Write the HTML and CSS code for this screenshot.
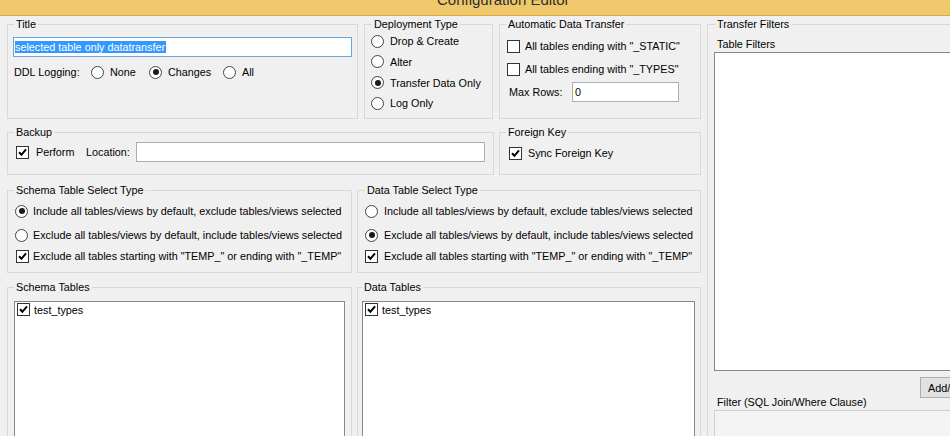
FILE: index.html
```html
<!DOCTYPE html>
<html>
<head>
<meta charset="utf-8">
<title>Configuration Editor</title>
<link rel="stylesheet" href="styles.css">
</head>
<body>
<div class="titlebar"><span class="title-text">Configuration Editor</span></div>
<div class="form">
  <div class="left">
    <div class="row row1">
      <fieldset class="grp g-title">
        <legend>Title</legend>
        <div class="textbox focused"><span class="sel">selected table only datatransfer</span></div>
        <div class="ddl">
          <span class="ddl-label">DDL Logging:</span>
          <span class="opt w-none"><span class="radio"></span>None</span>
          <span class="opt w-changes"><span class="radio on"></span>Changes</span>
          <span class="opt"><span class="radio"></span>All</span>
        </div>
      </fieldset>
      <fieldset class="grp g-deploy">
        <legend>Deployment Type</legend>
        <div class="stack">
          <div class="opt dep"><span class="radio"></span>Drop &amp; Create</div>
          <div class="opt dep"><span class="radio"></span>Alter</div>
          <div class="opt dep"><span class="radio on"></span>Transfer Data Only</div>
          <div class="opt dep"><span class="radio"></span>Log Only</div>
        </div>
      </fieldset>
      <fieldset class="grp g-adt">
        <legend>Automatic Data Transfer</legend>
        <div class="adt-body">
          <div class="opt adt-row"><span class="check"></span>All tables ending with "_STATIC"</div>
          <div class="opt adt-row"><span class="check"></span>All tables ending with "_TYPES"</div>
          <div class="opt adt-row max">
            <span class="max-label">Max Rows:</span>
            <div class="textbox small">0</div>
          </div>
        </div>
      </fieldset>
    </div>

    <div class="row row2">
      <fieldset class="grp g-backup">
        <legend>Backup</legend>
        <div class="opt backup-row">
          <span class="check on"><svg viewBox="0 0 11 11"><path d="M2 5.3 L4.4 7.8 L9 2.4"/></svg></span>
          <span class="perform">Perform</span>
          <span class="loc-label">Location:</span>
          <div class="textbox loc"></div>
        </div>
      </fieldset>
      <fieldset class="grp g-fk">
        <legend>Foreign Key</legend>
        <div class="opt fk-row"><span class="check on"><svg viewBox="0 0 11 11"><path d="M2 5.3 L4.4 7.8 L9 2.4"/></svg></span>Sync Foreign Key</div>
      </fieldset>
    </div>

    <div class="row row3">
      <fieldset class="grp g-schema-sel">
        <legend>Schema Table Select Type</legend>
        <div class="sel-body">
          <div class="opt s1"><span class="radio on"></span>Include all tables/views by default, exclude tables/views selected</div>
          <div class="opt s2"><span class="radio"></span>Exclude all tables/views by default, include tables/views selected</div>
          <div class="opt s3"><span class="check on"><svg viewBox="0 0 11 11"><path d="M2 5.3 L4.4 7.8 L9 2.4"/></svg></span>Exclude all tables starting with "TEMP_" or ending with "_TEMP"</div>
        </div>
      </fieldset>
      <fieldset class="grp g-data-sel">
        <legend>Data Table Select Type</legend>
        <div class="sel-body">
          <div class="opt s1"><span class="radio"></span>Include all tables/views by default, exclude tables/views selected</div>
          <div class="opt s2"><span class="radio on"></span>Exclude all tables/views by default, include tables/views selected</div>
          <div class="opt s3"><span class="check on"><svg viewBox="0 0 11 11"><path d="M2 5.3 L4.4 7.8 L9 2.4"/></svg></span>Exclude all tables starting with "TEMP_" or ending with "_TEMP"</div>
        </div>
      </fieldset>
    </div>

    <div class="row row4">
      <fieldset class="grp g-schema-tables">
        <legend>Schema Tables</legend>
        <div class="listbox">
          <div class="item"><span class="check on"><svg viewBox="0 0 11 11"><path d="M2 5.3 L4.4 7.8 L9 2.4"/></svg></span>test_types</div>
        </div>
      </fieldset>
      <fieldset class="grp g-data-tables">
        <legend>Data Tables</legend>
        <div class="listbox">
          <div class="item"><span class="check on"><svg viewBox="0 0 11 11"><path d="M2 5.3 L4.4 7.8 L9 2.4"/></svg></span>test_types</div>
        </div>
      </fieldset>
    </div>
  </div>

  <fieldset class="grp g-filters">
    <legend>Transfer Filters</legend>
    <div class="tf-label">Table Filters</div>
    <div class="listbox tf-list"></div>
    <div class="btn-row"><button class="btn">Add/Update</button></div>
    <div class="filter-label">Filter (SQL Join/Where Clause)</div>
    <div class="filter-box"></div>
  </fieldset>
</div>
</body>
</html>
```

FILE: styles.css
```css
html, body {
  margin: 0;
  padding: 0;
  background: #f0f0f0;
  overflow: hidden;
  width: 950px;
  height: 436px;
}

body {
  font-family: "Liberation Sans", Arial, sans-serif;
  font-size: 10.8px;
  color: #000;
}

.titlebar {
  height: 15px;
  background: #efc86b;
  border-bottom: 1px solid #d9a845;
  overflow: hidden;
  padding-left: 437px;
}

.title-text {
  display: block;
  font-size: 15px;
  line-height: 17px;
  margin-top: -9px;
  color: #2e2e2e;
  white-space: nowrap;
}

.form {
  display: flex;
  align-items: flex-start;
  padding-left: 7px;
  margin-top: 2px;
}

.left {
  width: 694px;
  flex: none;
}

.row {
  display: flex;
  gap: 0;
}

.row2 { margin-top: 7px; }
.row3 { margin-top: 9px; }
.row4 { margin-top: 8px; }

.grp {
  margin: 0;
  padding: 0;
  border: 1px solid #d8d8d8;
  box-sizing: border-box;
  min-width: 0;
  flex: none;
}

.grp legend {
  padding: 0 2px;
  margin-left: 6px;
  line-height: 13px;
  font-size: 10.8px;
  white-space: nowrap;
}

/* row 1 */
.g-title { width: 351px; height: 101px; }
.g-deploy { width: 129px; height: 101px; margin-left: 6px; }
.g-deploy legend { margin-left: 7px; }
.g-adt { width: 202px; height: 101px; margin-left: 6px; }

.textbox {
  box-sizing: border-box;
  height: 20px;
  background: #fff;
  border: 1px solid #abadb3;
  display: flex;
  align-items: center;
  padding-left: 2px;
  white-space: nowrap;
}

.textbox.focused {
  width: 339px;
  margin: 6px 0 0 5px;
  border-color: #6ea4dc;
  padding-left: 1px;
}

.sel {
  background: #3399ff;
  color: #fff;
  line-height: 12px;
  padding-right: 1px;
}

.ddl {
  display: flex;
  align-items: center;
  height: 16px;
  margin-top: 7px;
  margin-left: 6px;
}

.ddl-label { width: 77px; flex: none; }
.w-none { width: 58px; }
.w-changes { width: 74px; }

.opt {
  display: flex;
  align-items: center;
  white-space: nowrap;
}

.radio {
  box-sizing: border-box;
  width: 13px;
  height: 13px;
  border: 1px solid #444;
  border-radius: 50%;
  background: #fff;
  display: inline-flex;
  align-items: center;
  justify-content: center;
  margin-right: 6px;
  flex: none;
}

.radio.on::after {
  content: "";
  width: 6px;
  height: 6px;
  border-radius: 50%;
  background: #1a1a1a;
}

.check {
  box-sizing: border-box;
  width: 13px;
  height: 13px;
  border: 1px solid #333;
  background: #fff;
  display: inline-flex;
  align-items: center;
  justify-content: center;
  margin-right: 5px;
  flex: none;
}

.check svg {
  width: 11px;
  height: 11px;
}

.check svg path {
  fill: none;
  stroke: #000;
  stroke-width: 2;
}

.stack {
  padding-left: 6px;
}

.dep { height: 20.67px; }

.adt-body {
  padding: 5px 0 0 7px;
}

.adt-row { height: 20px; }
.adt-row + .adt-row { margin-top: 3px; }

.max-label {
  width: 63px;
  margin-left: 2px;
  flex: none;
}

.textbox.small { width: 107px; }

/* row 2 */
.g-backup { width: 487px; height: 49px; }
.g-fk { width: 202px; height: 49px; margin-left: 5px; }

.backup-row {
  height: 20px;
  margin-top: 3px;
  padding-left: 8px;
}

.backup-row .check { margin-right: 7px; }
.perform { width: 50px; flex: none; }
.loc-label { width: 50px; flex: none; }
.textbox.loc { width: 349px; }

.fk-row {
  height: 20px;
  margin-top: 4px;
  padding-left: 9px;
}

.fk-row .check { margin-right: 6px; }

/* row 3 */
.g-schema-sel { width: 345px; height: 89px; }
.g-data-sel { width: 344px; height: 89px; margin-left: 5px; }
.g-data-sel legend { margin-left: 7px; }

.sel-body { padding-left: 7px; }

.s1, .s2, .s3 { height: 20px; }
.s1 { margin-top: 4px; }
.s2 { margin-top: 4px; }
.s3 { margin-top: 1px; }

.g-schema-sel .radio { margin-right: 5px; }
.g-schema-sel .check { margin-left: 1px; margin-right: 4px; }
.g-data-sel .radio { margin-right: 6px; }
.g-data-sel .check { margin-right: 6px; }

/* row 4 */
.g-schema-tables { width: 345px; height: 170px; }
.g-data-tables { width: 344px; height: 170px; margin-left: 5px; }
.g-data-tables legend { margin-left: 4px; }

.listbox {
  box-sizing: border-box;
  background: #fff;
  border: 1px solid #828790;
}

.g-schema-tables .listbox {
  width: 331px;
  height: 200px;
  margin: 7px 0 0 6px;
}

.g-data-tables .listbox {
  width: 333px;
  height: 200px;
  margin: 7px 0 0 4px;
}

.item {
  display: flex;
  align-items: center;
  height: 15px;
  white-space: nowrap;
}

.g-schema-tables .item .check { margin-left: 2px; margin-right: 4px; }
.g-data-tables .item .check { margin-left: 2px; margin-right: 4px; }

/* transfer filters */
.g-filters {
  width: 260px;
  height: 440px;
  margin-left: 6px;
  flex: none;
}

.g-filters legend { margin-left: 7px; }

.tf-label {
  line-height: 13px;
  margin: 7px 0 0 9px;
}

.tf-list {
  width: 260px;
  height: 319px;
  margin: 1px 0 0 6px;
}

.btn-row {
  display: flex;
  margin-top: 6px;
  padding-left: 212px;
}

.btn {
  box-sizing: border-box;
  height: 21px;
  width: 80px;
  padding: 0 0 0 7px;
  text-align: left;
  font-family: "Liberation Sans", Arial, sans-serif;
  font-size: 10.8px;
  background: #e1e1e1;
  border: 1px solid #adadad;
  color: #000;
  white-space: nowrap;
  flex: none;
}

.filter-label {
  line-height: 13px;
  margin: -2px 0 0 9px;
  white-space: nowrap;
}

.filter-box {
  box-sizing: border-box;
  width: 260px;
  height: 60px;
  margin: 1px 0 0 6px;
  background: #f3f3f3;
  border: 1px solid #cfcfcf;
}
```
